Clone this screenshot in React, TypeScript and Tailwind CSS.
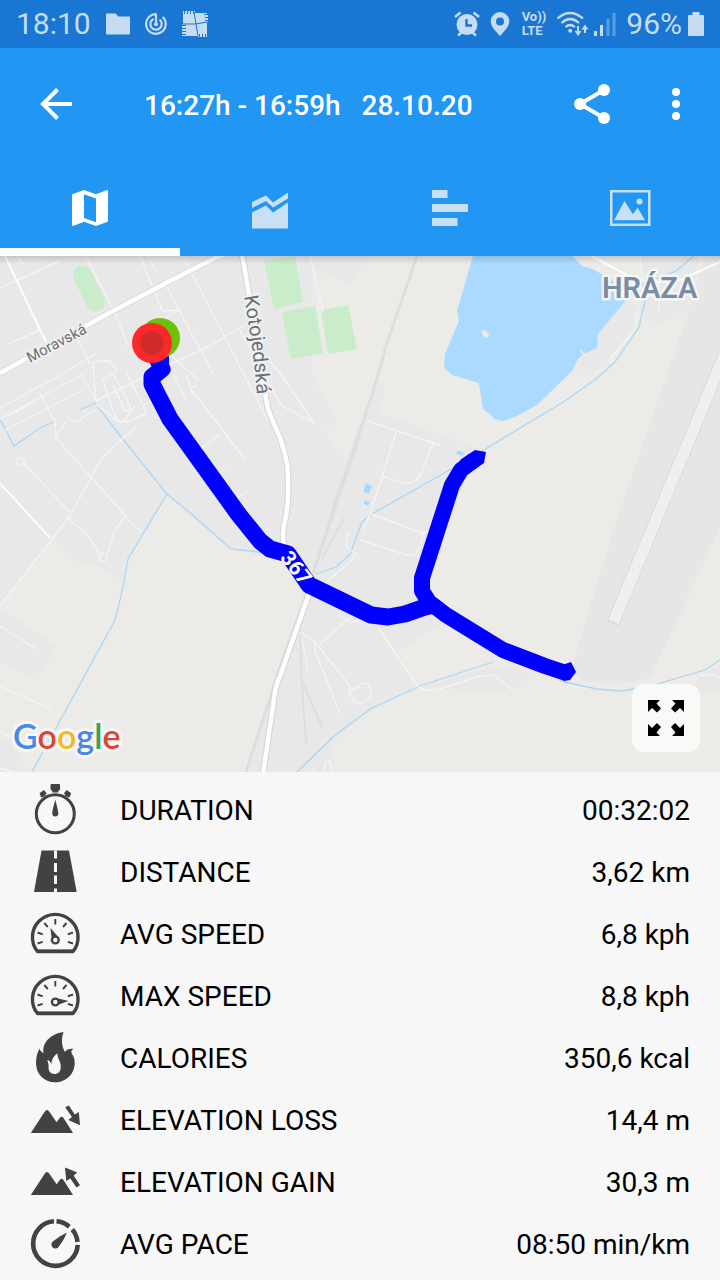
import React, { useState } from 'react';

const Gauge: React.FC<{ needle: string }> = ({ needle }) => (
  <>
    <path d="M7.500 42.500A22.800 22.800 0 1 1 43 42.500Z" fill="none" stroke="#424244" strokeWidth="3.400" strokeLinejoin="round" />
    <path d="M7 40.500h36.500v3.500H7Z" />
    <path
      d="M25.300 10v5.500M14.300 14l3.500 4M36.500 14l-3.500 4M7.500 23.500l5.200 1.900M43 23.500l-5.200 1.900M7.500 34.500l5.200-1.700M43 34.500l-5.200-1.700"
      stroke="#424244"
      strokeWidth="1.900"
    />
    <path d={needle} />
    <circle cx="25.300" cy="31" r="3.400" fill="#f7f7f7" stroke="#424244" strokeWidth="2.400" />
  </>
);

const Mountains = () => <path d="M.8 38 14.500 17Q17 13 19.500 17L26.600 27.300 29.700 23Q31.600 20.300 33.500 23L43 38Z" />;

const STATS = [
  {
    label: 'DURATION',
    value: '00:32:02',
    icon: (
      <>
        <circle cx="25.300" cy="28.800" r="19" fill="none" stroke="#424244" strokeWidth="3" />
        <path d="M21.500-1h7.600q1 0 1 1v4q0 1.200-1.500 1.400l-.5 2h-5.600l-.5-2q-1.500-.2-1.500-1.400V0q0-1 1-1Z" />
        <path d="M9.500 8.200 14 5l2.800 3.500-1.600 1.200.6 1.200-4.600 1.500ZM41.200 8.200 36.700 5l-2.900 3.500 1.600 1.200-.6 1.200 4.600 1.500Z" />
        <path d="M25.300 14.500c1 4 3 11 3 14a3 3 0 0 1-6 0c0-3 2-10 3-14Z" />
      </>
    ),
  },
  {
    label: 'DISTANCE',
    value: '3,62 km',
    icon: (
      <>
        <path d="M11.500 3.500h27.500L46.700 45H4Z" />
        <path d="M24 3.500h3v8h-3ZM24 16h3v9h-3ZM24 28.500h3v8.500h-3ZM24 41.500h3V45h-3Z" fill="#f7f7f7" />
      </>
    ),
  },
  {
    label: 'AVG SPEED',
    value: '6,8 kph',
    icon: <Gauge needle="M20.500 19q4.500 5 8.300 9.700l-6.700 2.600Q20.900 25 20.500 19Z" />,
  },
  {
    label: 'MAX SPEED',
    value: '8,8 kph',
    icon: <Gauge needle="M38.500 30q-6-1.500-12-2.800v7.200q6-2.300 12-4.400Z" />,
  },
  {
    label: 'CALORIES',
    value: '350,6 kcal',
    icon: (
      <path
        fillRule="evenodd"
        d="M33.500-1C20 1 12 10 13.500 20 11.500 19.500 10 17.500 9.700 15.500 7.500 19 6 24 6 30c0 11 8 19.300 19 19.300S44.700 41 44.700 30c0-4.500-1.200-7-3-9.500-.8-2-.2-3.800 2-4.500-4-.6-7 .5-8.700 3C31.500 13.500 31 6 33.500-1ZM27.500 20.500C27 25 31 28 30.800 34 30.600 39 28 41 24.500 41 20.500 41 18.300 38 18.600 34.500 18.800 32 18.300 29.500 17.200 27 19.500 27.500 20.800 29 21.300 31.500 21.800 27 23.500 22.500 27.500 20.500Z"
      />
    ),
  },
  {
    label: 'ELEVATION LOSS',
    value: '14,4 m',
    icon: (
      <>
        <Mountains />
        <path d="M35.200 12.300 38.800 10.500 44.800 19.500 48.800 17 50 30.300 38.300 25 42 22Z" />
      </>
    ),
  },
  {
    label: 'ELEVATION GAIN',
    value: '30,3 m',
    icon: (
      <>
        <Mountains />
        <path d="M50 28.200 46.500 30.500 40.300 21.500 36.300 24 35 10.500 47.300 15.500 43.700 18.500Z" />
      </>
    ),
  },
  {
    label: 'AVG PACE',
    value: '08:50 min/km',
    icon: (
      <>
        <g fill="none" stroke="#424244" strokeWidth="4.600">
          <path d="M47.700 25.800A22.300 22.300 0 1 1 24 2.300" />
          <path d="M26.500 2.300A22.300 22.300 0 0 1 39.300 7.700M42.300 10.500A22.300 22.300 0 0 1 47.500 23" />
        </g>
        <path d="M37 13.500Q34 21 29 27.200a4 4 0 1 1-5.600-5.200Q29.500 17 37 13.500Z" />
      </>
    ),
  },
];

const TABS = [
  {
    name: 'Map',
    icon: <path fillRule="evenodd" d="M1 4 12 0 24 4.300 35 0Q36 0 36 1V31Q36 32 35 32L24 36 12 31.700 1 36Q0 36 0 35V5Q0 4 1 4ZM12 4.200V28L24 32.200V8.400Z" />,
  },
  {
    name: 'Charts',
    icon: <path d="M0 12 14 5.500 21 12.500 36 2.500V8.500L21 17.500 14 11 0 18ZM0 22.500 14 15.500 21 22.500 36 12.500V38.500H0Z" />,
  },
  {
    name: 'Laps',
    icon: <path d="M0 0h15.500v8H0ZM0 14h36v8H0ZM0 28h25.500v8H0Z" />,
  },
  {
    name: 'Photos',
    icon: (
      <>
        <path fillRule="evenodd" d="M-2 0h40.500v36H-2ZM.5 2.500v31H36v-31Z" />
        <path d="M2 30.300 12.500 11 21 24.200 25.500 17.500 33 30.300Z" />
        <circle cx="27.500" cy="11.500" r="3" />
      </>
    ),
  },
];

// Minor streets, thin and almost white
const STREETS = `M42 0 80 -20M0 32 60 5M18 2 24 9M85 0 115 57 128 90M72 71 90 108M7 89 39 74M0 152 55 122 95 98
M0 163 82 119M5 174 87 132M8 160 36 145M39 135 55 166 56 182 125 259M22 206 70 256M55 182 66 166
M82 119 96 145 93 108Q94 104 110 105L117 115M96 145 160 113 210 90 246 68M102 122 115 160Q119 168 124 165
L135 150M103 123 113 117 130 150Q130 156 125 155L113 128M96 148 117 165Q121 169 140 160L147 158 126 115
M140 0 163 57M148 0 155 14M163 55 180 54 165 62M167 31 213 118M183 0 268 165M172 100 198 124M186 120 193 139
M190 132 196 130M192 134 244 202M221 178 200 193M175 120 186 145M310 0 323 56M240 74 282 150 315 167
M270 105 282 120 314 167M137 170 122 183 100 205 70 260 0 350M68 262 88 280 99 297M108 297 114 276 125 260 140 275
M0 370 36 393M0 430 52 454M246 236 233 245 222 250M226 213 205 225M65 160 76 166 95 154
M368 165 440 189M397 174 370 258 362 275M433 187 422 215Q418 227 405 228L382 220M371 258 419 276 424 278 417 297
Q415 301 407 299L360 284M421 277 428 276M300 376 313 384 319 391 350 430 349 435M319 389 346 365 360 353
M314 384 315 395 340 458M302 384 308 414M338 359 350 366 360 365M349 435 360 430M349 435 354 446 360 447
M323 329 352 304 356 298 346 291 348 277M378 370 387 385 418 431 424 434 440 433 480 420 493 419 513 434
M360 428 367 427Q373 434 370 442L360 448M700 420 714 418 720 422M640 0 643 25M659 33 659 57M637 57 634 75 609 104
M324 507 330 504 332 516M313 516 315 512M326 508 323 516M0 512 14 516M0 475 9 480`;

const RouteMap = () => (
  <svg viewBox="0 0 720 516" preserveAspectRatio="xMidYMid slice" className="block h-auto w-full" role="img" aria-label="Recorded route on map">
    <rect width="720" height="516" fill="#e8e8e8" />
    {/* farmland */}
    <g fill="#ecebe7">
      <path d="M312 12 348 28 372 0H720V516H335L332 488 360 460 420 432 397 396 440 368 425 330 430 310 478 192 381 158 385 128 376 123 345 207 323 173 338 167 312 120Z" />
      <path d="M53 283 82 310 95 309 123 325 129 303 166 238 185 256 230 293 285 302 305 330 245 516H0V352Z" />
    </g>
    <g fill="#e8e8e8">
      <path d="M0 352 57 390 38 424 0 406ZM0 480 10 488 28 516H0Z" />
      <path d="M420 432 493 410 535 415 512 436 440 433Z" />
      <path d="M600 75 627 43 637 50 634 75 600 112 585 120 576 105 597 92ZM640 0H700L687 60 655 67 640 60Z" />
      <path d="M687 60 705 0H720V272L650 422 620 428 583 425 570 416 618 260Z" fill="#e6e6e6" />
      <path d="M700 420 720 410V437H690Z" />
    </g>
    {/* runway */}
    <path d="M740 62 613 367" fill="none" stroke="#d6d6d6" strokeWidth="13" />
    <path d="M740 62 613.500 366" fill="none" stroke="#efefef" strokeWidth="11.500" />
    {/* parks */}
    <g fill="#c9edca">
      <path d="M264 5 295 0 303 46 274 53ZM282 56 315 50 323 97 291 103ZM321 54 348 49 357 93 328 98Z" />
      <path d="M82.500 19 95.500 46" stroke="#c9edca" strokeWidth="19" strokeLinecap="round" />
    </g>
    {/* railway */}
    <g fill="none" stroke="#dddee0" strokeWidth="2">
      <path d="M417 0 386 90 375 130 345 222 320 295 308 335 282 405 246 516" strokeWidth="3" />
      <path d="M376 124 368 150 335 245 312 325M361 178 339 240 318 305M344 262 322 303M300 372 302 430 306 487M300 420 323 473M308 335 300 372" />
    </g>
    {/* water */}
    <path
      d="M473 0 457 55 459 65 445 98 444 112 452 119 479 127 483 153 495 163 503 165 517 160 537 149 572 115 578 103 583 98 597 92 598 78 627 43 613 25 593 13 582 10 573 0ZM366 227 372 230 369 238 363 236ZM365 244 370 246 368 250 364 248ZM458 194 465 197 462 200 456 198Z"
      fill="#aadaff"
    />
    <path d="M481 75 485 74 489 78 488 82 483 80ZM580 93 585 98 581 97Z" fill="#ecebe7" />
    <path d="M0 163 14 190 40 172 54 166M80 154 95 147 122 182 167 238 128 303Q121 345 114 366L32 516M167 238 189 256 231 293 285 299M316 318 336 311 350 298 362 266 372 258 460 208 482 195 565 145 597 122 615 106 639 71 645 45 643 28 676 15 694 0M297 516 334 480 372 452 420 430 493 406 M560 425 597 433 622 435 650 430 705 414 720 404" fill="none" stroke="#aad6f7" strokeWidth="1.300" />
    {/* streets */}
    <path d={STREETS} fill="none" stroke="#f4f4f4" strokeWidth="1.400" />
    <circle cx="20.500" cy="206" r="4" fill="none" stroke="#f4f4f4" strokeWidth="1.500" />
    <circle cx="103.500" cy="301" r="4" fill="none" stroke="#f4f4f4" strokeWidth="1.500" />
    <path d="M5 0 46 86M-2 225 50 282M592 0 638 25M650 27 680 24 720 6" fill="none" stroke="#fdfdfd" strokeWidth="2" />
    {/* main roads */}
    <g fill="none" strokeLinejoin="round">
      <path d="M0 117 113 55 170 25 213 3 227 -2" stroke="#d8d8d8" strokeWidth="6" />
      <path d="M242 -1 245 15 265 135Q266 152 275 170 289 200 288 225 289 245 285 265 281 280 285 292L310 335 280 420Q275 430 273 450L263 518" stroke="#d4d4d4" strokeWidth="6.500" />
      <path d="M0 117 113 55 170 25 213 3 227 -2" stroke="#fff" strokeWidth="4.500" />
      <path d="M242 -1 245 15 265 135Q266 152 275 170 289 200 288 225 289 245 285 265 281 280 285 292L310 335 280 420Q275 430 273 450L263 518" stroke="#fff" strokeWidth="4.500" />
    </g>
    {/* recorded track */}
    <g fill="none" stroke="#0000ff" strokeWidth="16" strokeLinejoin="round">
      <path d="M155 98 162 113 152 121 152 128 170 163 239 259 260 285 270 293 288 298 309 329 371 359 388 361 405 358 425 351 434 349" strokeWidth="17" />
      <path d="M161 95V112" />
      <path d="M474 204 461 214 452 229 422 322 422 335 429 346 446 359 503 394 545 410 563 416" />
    </g>
    <path d="M475 194 486 196 484 207 474 214 460 204ZM562 409 571 406 576 416 570 424 564 425 555 421Z" fill="#0000ff" />
    <circle cx="160" cy="82" r="20" fill="#6dc108" />
    <circle cx="152" cy="87" r="20" fill="#ff2828" />
    <circle cx="152" cy="87" r="12" fill="#d32a2a" />
    {/* labels */}
    <path id="kotojedska" d="M244 40Q249 70 252 92T258 150" fill="none" />
    <g className="font-[Roboto,sans-serif]" strokeLinejoin="round" style={{ paintOrder: 'stroke' }}>
      <text x="30" y="107" fontSize="15" fill="#686f76" stroke="#f0f0f0" strokeWidth="4" transform="rotate(-28 30 107)">Moravská</text>
      <text fontSize="20" fill="#686f76" stroke="#f0f0f0" strokeWidth="4">
        <textPath href="#kotojedska">Kotojedská</textPath>
      </text>
      <text x="602" y="42" fontSize="29" fontWeight="600" fill="#7b8ca5" stroke="#f6f6f6" strokeWidth="5">HRÁZA</text>
      <text x="296" y="319" fontSize="21" fontWeight="700" fill="#fff" textAnchor="middle" transform="rotate(52 296 312)">367</text>
    </g>
    <text x="13" y="493" fontSize="34" fontWeight="600" className="font-[Lato,sans-serif]" stroke="#f6f6f5" strokeWidth="6" strokeLinejoin="round" style={{ paintOrder: 'stroke' }}>
      <tspan fill="#4885ed">G</tspan>
      <tspan fill="#db4437">o</tspan>
      <tspan fill="#f4b91d">o</tspan>
      <tspan fill="#4885ed">g</tspan>
      <tspan fill="#3f9f56">l</tspan>
      <tspan fill="#db4437">e</tspan>
    </text>
  </svg>
);

const StatusBar = () => (
  <div className="flex h-12 items-center justify-between bg-[#1976d2] px-4 text-[#c6dcf3]">
    <div className="flex items-center gap-[15px]">
      <span className="text-[30px] leading-none">18:10</span>
      <svg width="24" height="22" viewBox="0 0 24 22" fill="currentColor" aria-hidden="true">
        <path d="M1 .500h8.500l3 3H23q1 0 1 1V20.500q0 1-1 1H1q-1 0-1-1V1.500Q0 .5 1 .5Z" />
      </svg>
      <svg width="22" height="22" viewBox="0 0 22 22" fill="none" stroke="currentColor" strokeWidth="2.200" aria-hidden="true">
        <path d="M11 1V11M11.500 1.200A9.800 9.800 0 1 0 17.800 4" />
        <path d="M8.500 5.900A5.700 5.700 0 1 0 14.500 6.500" />
        <circle cx="11" cy="11.300" r="2" fill="currentColor" stroke="none" />
      </svg>
      <svg width="26" height="26" viewBox="0 0 26 26" aria-hidden="true">
        <path fill="currentColor" d="M1 0h1v3h1V0h2v3h1V0h2v3h1V0h2v3h1V0h1v2h12v1h-3v1h4v2h-3v1h3v2h-3v1h3v1l-1 1v14h-1v-3h-1v3h-2v-3h-1v3h-2v-3h-1v3h-1v-1H0v-1h4v-1H0v-2h4v-1H0v-2h4v-1H0v-2h4v-1H0v-1h1Z" />
        <path d="M12 1 16 25M0 13H13L26 11" fill="none" stroke="#1976d2" strokeWidth="1" />
      </svg>
    </div>
    <div className="flex items-center">
      <svg width="26" height="26" viewBox="0 0 26 26" aria-hidden="true">
        <path d="M1 6 6.500 1.500M25 6 19.500 1.500M4 24.500 8 21M22 24.500 18 21" stroke="currentColor" strokeWidth="2.500" />
        <circle cx="13" cy="13.500" r="10.500" fill="currentColor" />
        <path d="M12.500 8v6.500H18" fill="none" stroke="#1976d2" strokeWidth="2.400" />
      </svg>
      <svg className="ml-2.5" width="20" height="24" viewBox="0 0 20 24" aria-hidden="true">
        <path fill="currentColor" fillRule="evenodd" d="M10 0a9.300 9.300 0 0 1 9.300 9.300C19.300 15 13.500 20 10 24 6.500 20 .7 15 .7 9.300A9.300 9.300 0 0 1 10 0ZM10 5.500a4 4 0 1 0 0 8 4 4 0 0 0 0-8Z" />
      </svg>
      <span className="ml-3 flex flex-col text-[13px] font-bold leading-[14px]">
        <span>Vo))</span>
        <span>LTE</span>
      </span>
      <svg className="ml-2.5" width="34" height="26" viewBox="0 0 34 26" fill="none" stroke="currentColor" strokeWidth="2.200" aria-hidden="true">
        <path d="M1.500 7.500Q14-3.500 27 7.500M5.500 12Q14 4 23 12M9.500 16Q14 12 19 16" />
        <circle cx="14.200" cy="19.800" r="2" fill="currentColor" stroke="none" />
        <path d="M22 15V22M29 22V16" strokeWidth="2" />
        <path d="M18.500 20H25.500L22 25ZM25.500 18.500H32.500L29 13.500Z" fill="currentColor" stroke="none" />
      </svg>
      <svg className="ml-[3px]" width="24" height="24" viewBox="0 0 24 24" fill="currentColor" aria-hidden="true">
        <path d="M1 19h3v5H1ZM7 13h3v11H7Z" />
        <path d="M13.500 7h3v17h-3ZM19.500 1h3v23h-3Z" opacity="0.400" />
      </svg>
      <span className="ml-[9px] text-[30px] leading-none">96%</span>
      <svg className="ml-1.5" width="16" height="24" viewBox="0 0 16 24" fill="currentColor" aria-hidden="true">
        <path d="M4.500 0h7v3H15q1 0 1 1v19q0 1-1 1H1q-1 0-1-1V4q0-1 1-1h3.500Z" />
      </svg>
    </div>
  </div>
);

export default function App() {
  const [tab, setTab] = useState(0);

  return (
    <div className="flex min-h-screen flex-col bg-[#f7f7f7] font-[Roboto,sans-serif] text-black">
      <StatusBar />

      <header className="bg-[#2196f3] text-white">
        <div className="flex h-28 items-center pl-8 pr-5">
          <button aria-label="Back" className="flex size-12 items-center justify-center">
            <svg width="32" height="32" viewBox="0 0 32 32" fill="none" stroke="currentColor" strokeWidth="4" aria-hidden="true">
              <path d="M32 16H4M17.500 1.500 3 16 17.500 30.500" />
            </svg>
          </button>
          <h1 className="ml-16 flex-1 whitespace-pre pt-[3px] text-[28px] font-medium">16:27h - 16:59h   28.10.20</h1>
          <button aria-label="Share" className="flex size-12 items-center justify-center">
            <svg width="36" height="40" viewBox="0 0 36 40" aria-hidden="true">
              <path d="M30 6 6 20 30 34" fill="none" stroke="currentColor" strokeWidth="4" />
              <g fill="currentColor">
                <circle cx="30" cy="6" r="6" />
                <circle cx="6" cy="20" r="6" />
                <circle cx="30" cy="34" r="6" />
              </g>
            </svg>
          </button>
          <button aria-label="More options" className="ml-9 flex size-12 items-center justify-center">
            <svg width="8" height="32" viewBox="0 0 8 32" fill="currentColor" aria-hidden="true">
              <circle cx="4" cy="4" r="4" />
              <circle cx="4" cy="16" r="4" />
              <circle cx="4" cy="28" r="4" />
            </svg>
          </button>
        </div>

        <nav className="grid h-24 grid-cols-4">
          {TABS.map((t, i) => (
            <button
              key={t.name}
              aria-label={t.name}
              onClick={() => setTab(i)}
              className={`flex items-center justify-center border-y-8 border-t-transparent ${tab === i ? 'border-b-white text-white' : 'border-b-transparent text-[#c8e0f5]'}`}
            >
              <svg className="overflow-visible" width="36" height="36" viewBox="0 0 36 36" fill="currentColor" aria-hidden="true">
                {t.icon}
              </svg>
            </button>
          ))}
        </nav>
      </header>

      <div className="relative">
        <RouteMap />
        <div className="absolute inset-x-0 top-0 h-2 bg-linear-to-b from-black/15 to-transparent"></div>
        <button aria-label="Full screen" className="absolute bottom-5 right-5 flex size-17 items-center justify-center rounded-xl bg-[#f9f9f8]">
          <svg width="36" height="36" viewBox="0 0 36 36" aria-hidden="true">
            <path d="M0 0H12L8.500 3.500 13 8.500 9 12.500 4 8 0 12ZM36 0V12L32 8 27 12.500 23 8.500 27.500 3.500 24 0ZM0 36V24L4 28 9 23 13 27 8.500 32.500 12 36ZM36 36H24L27.500 32.500 23 27 27 23 32 28 36 24Z" />
          </svg>
        </button>
      </div>

      <dl className="pt-[7px]">
        {STATS.map(s => (
          <div key={s.label} className="flex h-[62px] items-center px-[30px] text-[28px] leading-8">
            <svg className="shrink-0 overflow-visible" width="50" height="50" viewBox="0 0 50 50" fill="#424244" aria-hidden="true">
              {s.icon}
            </svg>
            <dt className="ml-10 flex-1 pt-0.5">{s.label}</dt>
            <dd className="pt-0.5">{s.value}</dd>
          </div>
        ))}
      </dl>
    </div>
  );
}
